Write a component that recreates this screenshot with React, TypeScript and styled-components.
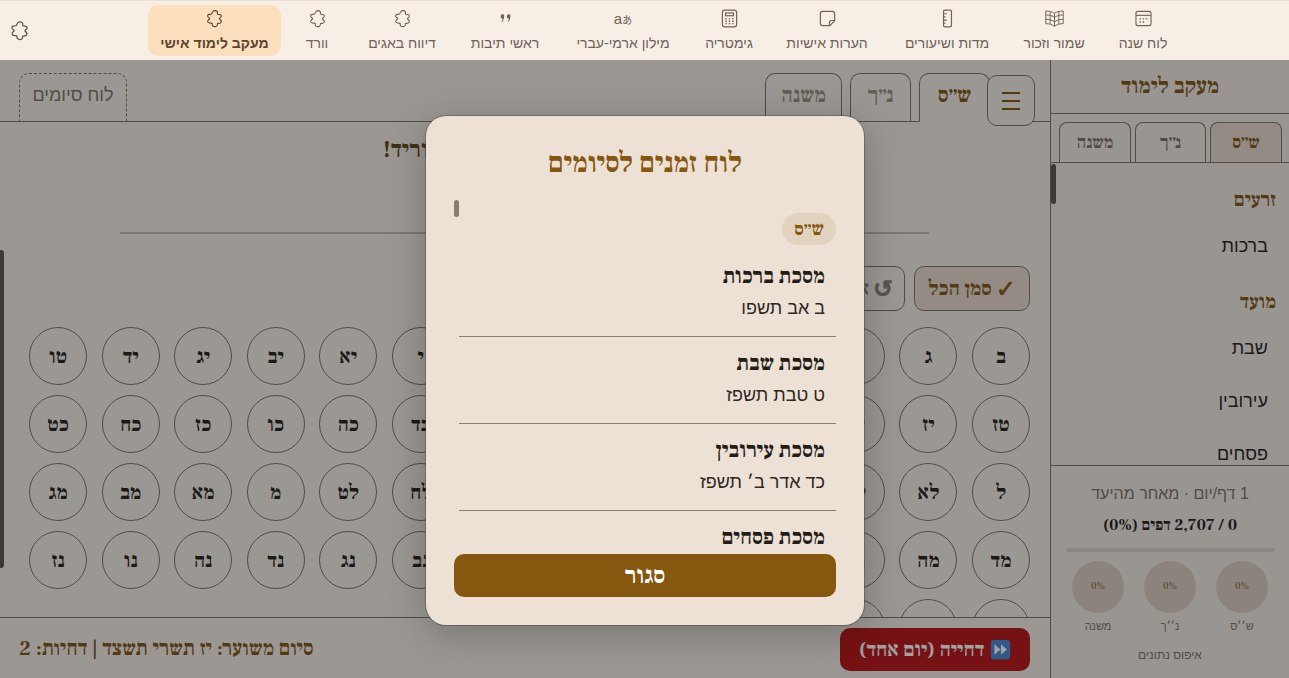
import React from 'react';
import styled, { createGlobalStyle } from 'styled-components';

const GlobalStyle = createGlobalStyle`
  html, body {
    margin: 0;
    padding: 0;
    height: 100%;
    overflow: hidden;
    background: #f6eee6;
  }
  * {
    box-sizing: border-box;
  }
`;

const sans = `"Liberation Sans", Arial, sans-serif`;
const serif = `"Frank Ruhl Libre", "Liberation Serif", serif`;

const Page = styled.div`
  position: relative;
  width: 1289px;
  height: 678px;
  overflow: hidden;
  direction: rtl;
  display: flex;
  flex-direction: column;
  font-family: ${sans};
  color: #2b2420;
`;

const TopBar = styled.header`
  height: 60px;
  flex: none;
  display: flex;
  align-items: center;
  background: #f7efe6;
  border-top: 1px solid #ecdfd1;
  padding-right: 104px;
  padding-left: 8px;
`;

const NavList = styled.nav`
  display: flex;
  align-items: center;
`;

const NavItem = styled.div<{ $active?: boolean; $w: number }>`
  width: ${(p) => p.$w}px;
  height: 51px;
  flex: none;
  margin-right: ${(p) => (p.$active ? 4 : 0)}px;
  display: flex;
  flex-direction: column;
  align-items: center;
  gap: 7px;
  padding-top: 4px;
  border-radius: 10px;
  font-size: 14px;
  white-space: nowrap;
  color: ${(p) => (p.$active ? '#5a4530' : '#6e6259')};
  font-weight: ${(p) => (p.$active ? 700 : 400)};
  background: ${(p) => (p.$active ? '#fcdfbc' : 'transparent')};
  svg {
    display: block;
    width: 19px;
    height: 19px;
    flex: none;
  }
`;

const LangGlyph = styled.div`
  height: 19px;
  flex: none;
  display: flex;
  align-items: center;
  direction: ltr;
  font-size: 15px;
  line-height: 19px;
  font-weight: 400;
  font-family: ${sans};
  b {
    font-family: "Noto Sans CJK JP", sans-serif;
    font-weight: 400;
    font-size: 10px;
    margin-top: 2px;
  }
`;

const CornerIcon = styled.div`
  margin-right: auto;
  margin-left: 1px;
  color: #5e5348;
  svg {
    display: block;
    width: 21px;
    height: 21px;
  }
`;

const Body = styled.div`
  flex: 1;
  min-height: 0;
  display: flex;
`;

const Sidebar = styled.aside`
  width: 239px;
  flex: none;
  display: flex;
  flex-direction: column;
  border-left: 1px solid #7b7067;
  background: #f2e9e2;
`;

const SideTitle = styled.div`
  height: 54px;
  flex: none;
  display: flex;
  align-items: center;
  justify-content: center;
  padding-bottom: 2px;
  border-bottom: 1px solid #7b7067;
  font-family: ${serif};
  font-weight: 700;
  font-size: 22.4px;
  color: #7c5210;
`;

const SideTabs = styled.div`
  height: 49px;
  flex: none;
  display: flex;
  align-items: flex-end;
  gap: 4px;
  padding: 0 7px 0 8px;
  border-bottom: 1px solid #7b7067;
`;

const SideTab = styled.div<{ $active?: boolean; $w: number }>`
  width: ${(p) => p.$w}px;
  height: 40px;
  display: flex;
  align-items: center;
  justify-content: center;
  padding-bottom: 1px;
  border: 1px solid #7b7067;
  border-bottom: none;
  border-radius: 8px 8px 0 0;
  font-family: ${serif};
  font-weight: 700;
  font-size: 17.6px;
  color: ${(p) => (p.$active ? '#7c5210' : '#7b7067')};
  background: ${(p) => (p.$active ? '#e8d9cc' : 'transparent')};
`;

const SideList = styled.div`
  position: relative;
  height: 302px;
  flex: none;
  overflow: hidden;
  padding: 26px 13px 0 0;
`;

const SideScrollThumb = styled.div`
  position: absolute;
  left: 0;
  top: 1px;
  width: 5px;
  height: 40px;
  border-radius: 3px;
  background: #5a514a;
`;

const SedarName = styled.div`
  font-family: ${serif};
  font-weight: 700;
  font-size: 20px;
  line-height: 22px;
  color: #7c5210;
`;

const TractateName = styled.div`
  font-size: 18px;
  line-height: 22px;
  padding-right: 8px;
  color: #1d1b19;
`;

const SedarGroup = styled.div`
  display: flex;
  flex-direction: column;
  gap: 24px;
  margin-bottom: 34px;
`;

const TractateStack = styled.div`
  display: flex;
  flex-direction: column;
  gap: 31px;
`;

const SideStats = styled.div`
  flex: 1;
  border-top: 1px solid #7b7067;
  display: flex;
  flex-direction: column;
  align-items: center;
  padding-top: 19px;
`;

const StatsLine = styled.div`
  font-size: 16px;
  line-height: 18px;
  color: #7b7067;
`;

const StatsTotal = styled.div`
  margin-top: 13px;
  font-family: ${serif};
  font-weight: 700;
  font-size: 16px;
  line-height: 18px;
  color: #1d1b19;
`;

const StatsBar = styled.div`
  margin-top: 14px;
  width: 209px;
  height: 4px;
  border-radius: 2px;
  background: #e0d2c6;
`;

const RingRow = styled.div`
  margin-top: 9px;
  display: flex;
  gap: 20px;
`;

const RingCol = styled.div`
  display: flex;
  flex-direction: column;
  align-items: center;
  gap: 6px;
`;

const Ring = styled.div`
  width: 52px;
  height: 52px;
  border-radius: 50%;
  background: #dccdbf;
  display: flex;
  align-items: center;
  justify-content: center;
  padding-bottom: 4px;
  font-family: ${serif};
  font-size: 10px;
  color: #7c5210;
`;

const RingLabel = styled.div`
  font-size: 11px;
  line-height: 14px;
  color: #7b7067;
`;

const ResetLink = styled.div`
  margin-top: 14px;
  font-size: 12px;
  line-height: 16px;
  color: #7b7067;
`;

const Main = styled.main`
  flex: 1;
  min-width: 0;
  display: flex;
  flex-direction: column;
  background: #f6eee6;
`;

const TabsBar = styled.div`
  position: relative;
  height: 62px;
  flex: none;
  display: flex;
  align-items: flex-end;
  padding: 0 15px 0 19px;
  border-bottom: 1px solid #7b7067;
`;

const MenuButton = styled.div`
  width: 48px;
  height: 51px;
  flex: none;
  margin-bottom: -5px;
  margin-left: -3px;
  position: relative;
  display: flex;
  align-items: center;
  justify-content: center;
  border: 1px solid #7b7067;
  border-radius: 10px;
  background: #f6eee6;
`;

const MenuLines = styled.div`
  width: 18px;
  display: flex;
  flex-direction: column;
  gap: 6px;
  span {
    display: block;
    height: 2px;
    background: #7c5210;
  }
`;

const MainTab = styled.div<{ $active?: boolean; $w: number }>`
  width: ${(p) => p.$w}px;
  height: ${(p) => (p.$active ? 49 : 48)}px;
  flex: none;
  margin-bottom: ${(p) => (p.$active ? -1 : 0)}px;
  margin-left: 8px;
  display: flex;
  align-items: center;
  justify-content: center;
  padding-bottom: 6px;
  border: 1px solid #7b7067;
  border-bottom: ${(p) => (p.$active ? '1px solid #f6eee6' : 'none')};
  border-radius: 10px 10px 0 0;
  font-family: ${serif};
  font-weight: 700;
  font-size: 21.5px;
  color: ${(p) => (p.$active ? '#7c5210' : '#9a8e80')};
  background: ${(p) => (p.$active ? '#f6eee6' : 'transparent')};
`;

const SiyumTab = styled.div`
  margin-right: auto;
  width: 108px;
  height: 48px;
  display: flex;
  align-items: center;
  justify-content: center;
  padding-bottom: 5px;
  border: 1px dashed #7b7067;
  border-bottom: none;
  border-radius: 10px 10px 0 0;
  font-size: 18px;
  color: #7b7067;
`;

const Content = styled.div`
  position: relative;
  flex: 1;
  min-height: 0;
  overflow: hidden;
  padding: 15px 20px 0 29px;
`;

const LeftScrollThumb = styled.div`
  position: absolute;
  left: 0;
  top: 128px;
  width: 4px;
  height: 318px;
  border-radius: 0 3px 3px 0;
  background: #5a514a;
`;

const Headline = styled.div`
  text-align: center;
  font-family: ${serif};
  font-weight: 700;
  font-size: 24px;
  line-height: 26px;
  height: 24px;
  color: #5c4410;
`;

const ProgressLine = styled.div`
  margin: 71px 101px 0 91px;
  height: 2px;
  background: #c4b9ae;
`;

const ActionRow = styled.div`
  margin-top: 32px;
  display: flex;
  gap: 9px;
`;

const ActionButton = styled.div<{ $primary?: boolean }>`
  height: 45px;
  width: 116px;
  flex: none;
  display: flex;
  align-items: center;
  justify-content: center;
  gap: 4px;
  border: 1px solid #7b7067;
  border-radius: 10px;
  font-family: ${serif};
  font-weight: 700;
  font-size: 20.8px;
  white-space: nowrap;
  color: ${(p) => (p.$primary ? '#7c5210' : '#8a7f74')};
  background: ${(p) => (p.$primary ? '#e8d9cc' : 'transparent')};
  span {
    font-family: "DejaVu Sans", sans-serif;
    font-size: 24px;
    -webkit-text-stroke: 0.6px currentColor;
  }
`;

const DafGrid = styled.div`
  margin-top: 16px;
  display: grid;
  grid-template-columns: repeat(14, 58px);
  justify-content: space-between;
  row-gap: 10px;
`;

const DafCircle = styled.div`
  width: 58px;
  height: 58px;
  display: flex;
  align-items: center;
  justify-content: center;
  border: 1px solid #7b7067;
  border-radius: 50%;
  font-family: ${serif};
  font-weight: 700;
  font-size: 20.8px;
  color: #221c17;
`;

const Footer = styled.div`
  height: 61px;
  flex: none;
  display: flex;
  align-items: center;
  justify-content: space-between;
  padding: 0 20px 0 19px;
  border-top: 1px solid #7b7067;
`;

const DelayButton = styled.div`
  width: 190px;
  height: 43px;
  margin-top: 2px;
  display: flex;
  align-items: center;
  justify-content: center;
  gap: 6px;
  border-radius: 10px;
  background: #b80f0f;
  font-family: ${serif};
  font-weight: 700;
  font-size: 20.8px;
  color: #fff;
  svg {
    width: 21px;
    height: 21px;
    flex: none;
  }
`;

const FooterInfo = styled.div`
  font-family: ${serif};
  font-weight: 700;
  font-size: 21px;
  color: #7c5210;
`;

const Backdrop = styled.div`
  position: absolute;
  top: 60px;
  left: 0;
  right: 0;
  bottom: 0;
  background: rgba(20, 22, 25, 0.4);
  display: flex;
  justify-content: center;
  padding: 56px 425px 0 426px;
`;

const Modal = styled.div`
  width: 438px;
  height: 509px;
  display: flex;
  flex-direction: column;
  padding: 28px;
  border-radius: 20px;
  background: #ede1d5;
  box-shadow: 0 8px 40px rgba(0, 0, 0, 0.25), 0 0 0 1px rgba(90, 80, 70, 0.5);
`;

const ModalTitle = styled.div`
  height: 36px;
  flex: none;
  text-align: center;
  font-family: ${serif};
  font-weight: 700;
  font-size: 28.5px;
  line-height: 40px;
  color: #85570f;
`;

const ModalScroll = styled.div`
  position: relative;
  flex: 1;
  min-height: 0;
  overflow: hidden;
  margin-top: 20px;
  margin-bottom: 8px;
`;

const ModalThumb = styled.div`
  position: absolute;
  left: 0;
  top: 0;
  width: 5px;
  height: 17px;
  border-radius: 3px;
  background: #8a7d6f;
`;

const ScrollInner = styled.div`
  margin-left: 5px;
  padding-top: 13px;
`;

const Chip = styled.div`
  width: 54px;
  height: 32px;
  display: flex;
  align-items: center;
  justify-content: center;
  border-radius: 16px;
  background: #e2d2c0;
  font-family: ${serif};
  font-weight: 700;
  font-size: 19px;
  color: #85570f;
`;

const SiyumItem = styled.div`
  padding: 14px 11px 0 0;
  border-bottom: 1px solid #8a7d70;
  height: 87px;
  ${Chip} + & {
    padding-top: 19px;
    height: 92px;
  }
`;

const SiyumName = styled.div`
  font-family: ${serif};
  font-weight: 700;
  font-size: 22px;
  line-height: 24px;
  color: #231d18;
`;

const SiyumDate = styled.div`
  margin-top: 8px;
  font-size: 18px;
  line-height: 24px;
  color: #2e2823;
`;

const CloseButton = styled.div`
  height: 43px;
  flex: none;
  display: flex;
  align-items: center;
  justify-content: center;
  padding-bottom: 1px;
  border-radius: 10px;
  background: #85570f;
  color: #fff;
  font-family: ${serif};
  font-weight: 700;
  font-size: 24px;
`;

const PuzzleIcon = () => (
  <svg viewBox="0 0 24 24" fill="none" stroke="currentColor" strokeWidth="1.4" strokeLinejoin="round">
    <path d="M10 3.2C11 1.800 14.500 1.500 15.500 3.500C16 4.800 15.400 5.800 15.800 6.600C16.500 7.400 19.500 6.200 20.500 8C21.400 9.800 19.500 11 18.600 11.600C18 12 18 12.600 18.600 13C19.800 13.800 21.200 15 20.200 17C19.300 18.600 17 17.800 16 18.400C15.200 19 16 20.500 14.600 21.600C13 22.800 10.500 22.400 9.400 20.800C8.600 19.600 9.600 18.600 8.800 18C7.800 17.400 5 18.600 3.800 16.800C2.800 15.200 4.400 13.600 5.400 13C6 12.600 6 12 5.400 11.500C4.400 10.800 2.600 9.600 3.400 7.800C4.200 6.200 7 7.200 8.200 6.400C9 5.800 8.800 4.600 10 3.200Z" />
  </svg>
);

const CalendarIcon = () => (
  <svg viewBox="0 0 24 24" fill="none" stroke="currentColor" strokeWidth="1.4">
    <rect x="2.500" y="3" width="19" height="18" rx="2.500" />
    <path d="M2.500 8h19" />
    <path d="M7 12.500h1.800M11 12.500h1.800M15 12.500h1.800M7 16.500h1.800M11 16.500h1.800" strokeWidth="1.800" />
  </svg>
);

const BookIcon = () => (
  <svg viewBox="0 0 24 24" fill="none" stroke="currentColor" strokeWidth="1.200" strokeLinejoin="round">
    <path d="M12 5.500C9.500 3.500 5 2.500 1 2.500v16c4 0 8.500 1 11 3.500 2.500-2.500 7-3.500 11-3.500v-16C19 2.500 14.500 3.500 12 5.500z" />
    <path d="M12 5.500V22M1 7.500c4 0 8 1 11 3 3-2 7-3 11-3M1 13c4 0 8 1 11 3.200 3-2.200 7-3.200 11-3.200M6.500 3v16M17.500 3v16" />
  </svg>
);

const RulerIcon = () => (
  <svg viewBox="0 0 24 24" fill="none" stroke="currentColor" strokeWidth="1.500">
    <rect x="7" y="1.500" width="10" height="21" rx="1.500" />
    <path d="M7 6h4M7 10h2.500M7 14h4M7 18h2.500" />
  </svg>
);

const NoteIcon = () => (
  <svg viewBox="0 0 24 24" fill="none" stroke="currentColor" strokeWidth="1.500" strokeLinejoin="round">
    <path d="M6 3h12a3 3 0 0 1 3 3v9l-6 6H6a3 3 0 0 1-3-3V6a3 3 0 0 1 3-3z" />
    <path d="M21 14.500h-4a2.500 2.500 0 0 0-2.500 2.500v4" />
  </svg>
);

const CalcIcon = () => (
  <svg viewBox="0 0 24 24" fill="none" stroke="currentColor" strokeWidth="1.500">
    <rect x="3" y="1.500" width="18" height="21" rx="3" />
    <rect x="7" y="5" width="10" height="3.500" />
    <path d="M6.800 12.500h1.800M11.100 12.500h1.800M15.400 12.500h1.800M6.800 15.500h1.800M11.100 15.500h1.800M15.400 15.500h1.800M6.800 18.500h1.800M11.100 18.500h1.800M15.400 18.500h1.800" strokeWidth="1.800" />
  </svg>
);

const QuoteIcon = () => (
  <svg viewBox="-4 -4 32 32" fill="currentColor">
    <path d="M7.500 5a2.300 2.300 0 0 1 2.300 2.300c0 4.500-1.500 8.800-4 11.200l-.8-.7c1.300-1.800 2-3.500 2.200-5.500A3.300 3.300 0 0 1 7.500 5zM18 5a2.300 2.300 0 0 1 2.300 2.300c0 4.500-1.500 8.800-4 11.200l-.8-.7c1.300-1.800 2-3.500 2.200-5.500A3.300 3.300 0 0 1 18 5z" />
  </svg>
);

const FastForwardEmoji = () => (
  <svg viewBox="0 0 24 24">
    <rect x="1" y="1" width="22" height="22" rx="3" fill="#3f86d8" />
    <path d="M5 6l7 6-7 6zM12.500 6l7 6-7 6z" fill="#fff" />
  </svg>
);

const navItems: { label: string; icon: React.ReactNode; w: number; active?: boolean }[] = [
  { label: 'לוח שנה', icon: <CalendarIcon />, w: 84 },
  { label: 'שמור וזכור', icon: <BookIcon />, w: 94 },
  { label: 'מדות ושיעורים', icon: <RulerIcon />, w: 120 },
  { label: 'הערות אישיות', icon: <NoteIcon />, w: 120 },
  { label: 'גימטריה', icon: <CalcIcon />, w: 76 },
  { label: 'מילון ארמי-עברי', icon: <LangGlyph>a<b>あ</b></LangGlyph>, w: 136 },
  { label: 'ראשי תיבות', icon: <QuoteIcon />, w: 100 },
  { label: 'דיווח באגים', icon: <PuzzleIcon />, w: 106 },
  { label: 'וורד', icon: <PuzzleIcon />, w: 64 },
  { label: 'מעקב לימוד אישי', icon: <PuzzleIcon />, w: 133, active: true },
];

const dapim = [
  'ב', 'ג', 'ד', 'ה', 'ו', 'ז', 'ח', 'ט', 'י', 'יא', 'יב', 'יג', 'יד', 'טו',
  'טז', 'יז', 'יח', 'יט', 'כ', 'כא', 'כב', 'כג', 'כד', 'כה', 'כו', 'כז', 'כח', 'כט',
  'ל', 'לא', 'לב', 'לג', 'לד', 'לה', 'לו', 'לז', 'לח', 'לט', 'מ', 'מא', 'מב', 'מג',
  'מד', 'מה', 'מו', 'מז', 'מח', 'מט', 'נ', 'נא', 'נב', 'נג', 'נד', 'נה', 'נו', 'נז',
  'נח', 'נט', 'ס', 'סא', 'סב', 'סג', 'סד',
];

const siyumim = [
  { name: 'מסכת ברכות', date: 'ב אב תשפו' },
  { name: 'מסכת שבת', date: 'ט טבת תשפז' },
  { name: 'מסכת עירובין', date: 'כד אדר ב׳ תשפז' },
  { name: 'מסכת פסחים', date: 'ג סיון תשפז' },
];

const rings = ['ש׳׳ס', 'נ׳׳ך', 'משנה'];

export default function App() {
  return (
    <Page>
      <GlobalStyle />
      <TopBar>
        <NavList>
          {navItems.map((item) => (
            <NavItem key={item.label} $active={item.active} $w={item.w}>
              {item.icon}
              <span>{item.label}</span>
            </NavItem>
          ))}
        </NavList>
        <CornerIcon>
          <PuzzleIcon />
        </CornerIcon>
      </TopBar>

      <Body>
        <Sidebar>
          <SideTitle>מעקב לימוד</SideTitle>
          <SideTabs>
            <SideTab $active $w={72}>ש׳׳ס</SideTab>
            <SideTab $w={71}>נ׳׳ך</SideTab>
            <SideTab $w={72}>משנה</SideTab>
          </SideTabs>
          <SideList>
            <SideScrollThumb />
            <SedarGroup>
              <SedarName>זרעים</SedarName>
              <TractateStack>
                <TractateName>ברכות</TractateName>
              </TractateStack>
            </SedarGroup>
            <SedarGroup>
              <SedarName>מועד</SedarName>
              <TractateStack>
                <TractateName>שבת</TractateName>
                <TractateName>עירובין</TractateName>
                <TractateName>פסחים</TractateName>
              </TractateStack>
            </SedarGroup>
          </SideList>
          <SideStats>
            <StatsLine>1 דף/יום · מאחר מהיעד</StatsLine>
            <StatsTotal>0 / 2,707 דפים (0%)</StatsTotal>
            <StatsBar />
            <RingRow>
              {rings.map((r) => (
                <RingCol key={r}>
                  <Ring>0%</Ring>
                  <RingLabel>{r}</RingLabel>
                </RingCol>
              ))}
            </RingRow>
            <ResetLink>איפוס נתונים</ResetLink>
          </SideStats>
        </Sidebar>

        <Main>
          <TabsBar>
            <MenuButton>
              <MenuLines>
                <span />
                <span />
                <span />
              </MenuLines>
            </MenuButton>
            <MainTab $active $w={71}>ש׳׳ס</MainTab>
            <MainTab $w={61}>נ׳׳ך</MainTab>
            <MainTab $w={77}>משנה</MainTab>
            <SiyumTab>לוח סיומים</SiyumTab>
          </TabsBar>
          <Content>
            <LeftScrollThumb />
            <Headline>התחילו ללמוד דף, בהצלחה וריד!</Headline>
            <ProgressLine />
            <ActionRow>
              <ActionButton $primary><span>✓</span>סמן הכל</ActionButton>
              <ActionButton><span>↺</span>אפס הכל</ActionButton>
            </ActionRow>
            <DafGrid>
              {dapim.map((d) => (
                <DafCircle key={d}>{d}</DafCircle>
              ))}
            </DafGrid>
          </Content>
          <Footer>
            <DelayButton>
              <FastForwardEmoji />
              דחייה (יום אחד)
            </DelayButton>
            <FooterInfo>סיום משוער: יז תשרי תשצד | דחיות: 2</FooterInfo>
          </Footer>
        </Main>
      </Body>

      <Backdrop>
        <Modal>
          <ModalTitle>לוח זמנים לסיומים</ModalTitle>
          <ModalScroll>
            <ModalThumb />
            <ScrollInner>
              <Chip>ש׳׳ס</Chip>
              {siyumim.map((s) => (
                <SiyumItem key={s.name}>
                  <SiyumName>{s.name}</SiyumName>
                  <SiyumDate>{s.date}</SiyumDate>
                </SiyumItem>
              ))}
            </ScrollInner>
          </ModalScroll>
          <CloseButton>סגור</CloseButton>
        </Modal>
      </Backdrop>
    </Page>
  );
}
